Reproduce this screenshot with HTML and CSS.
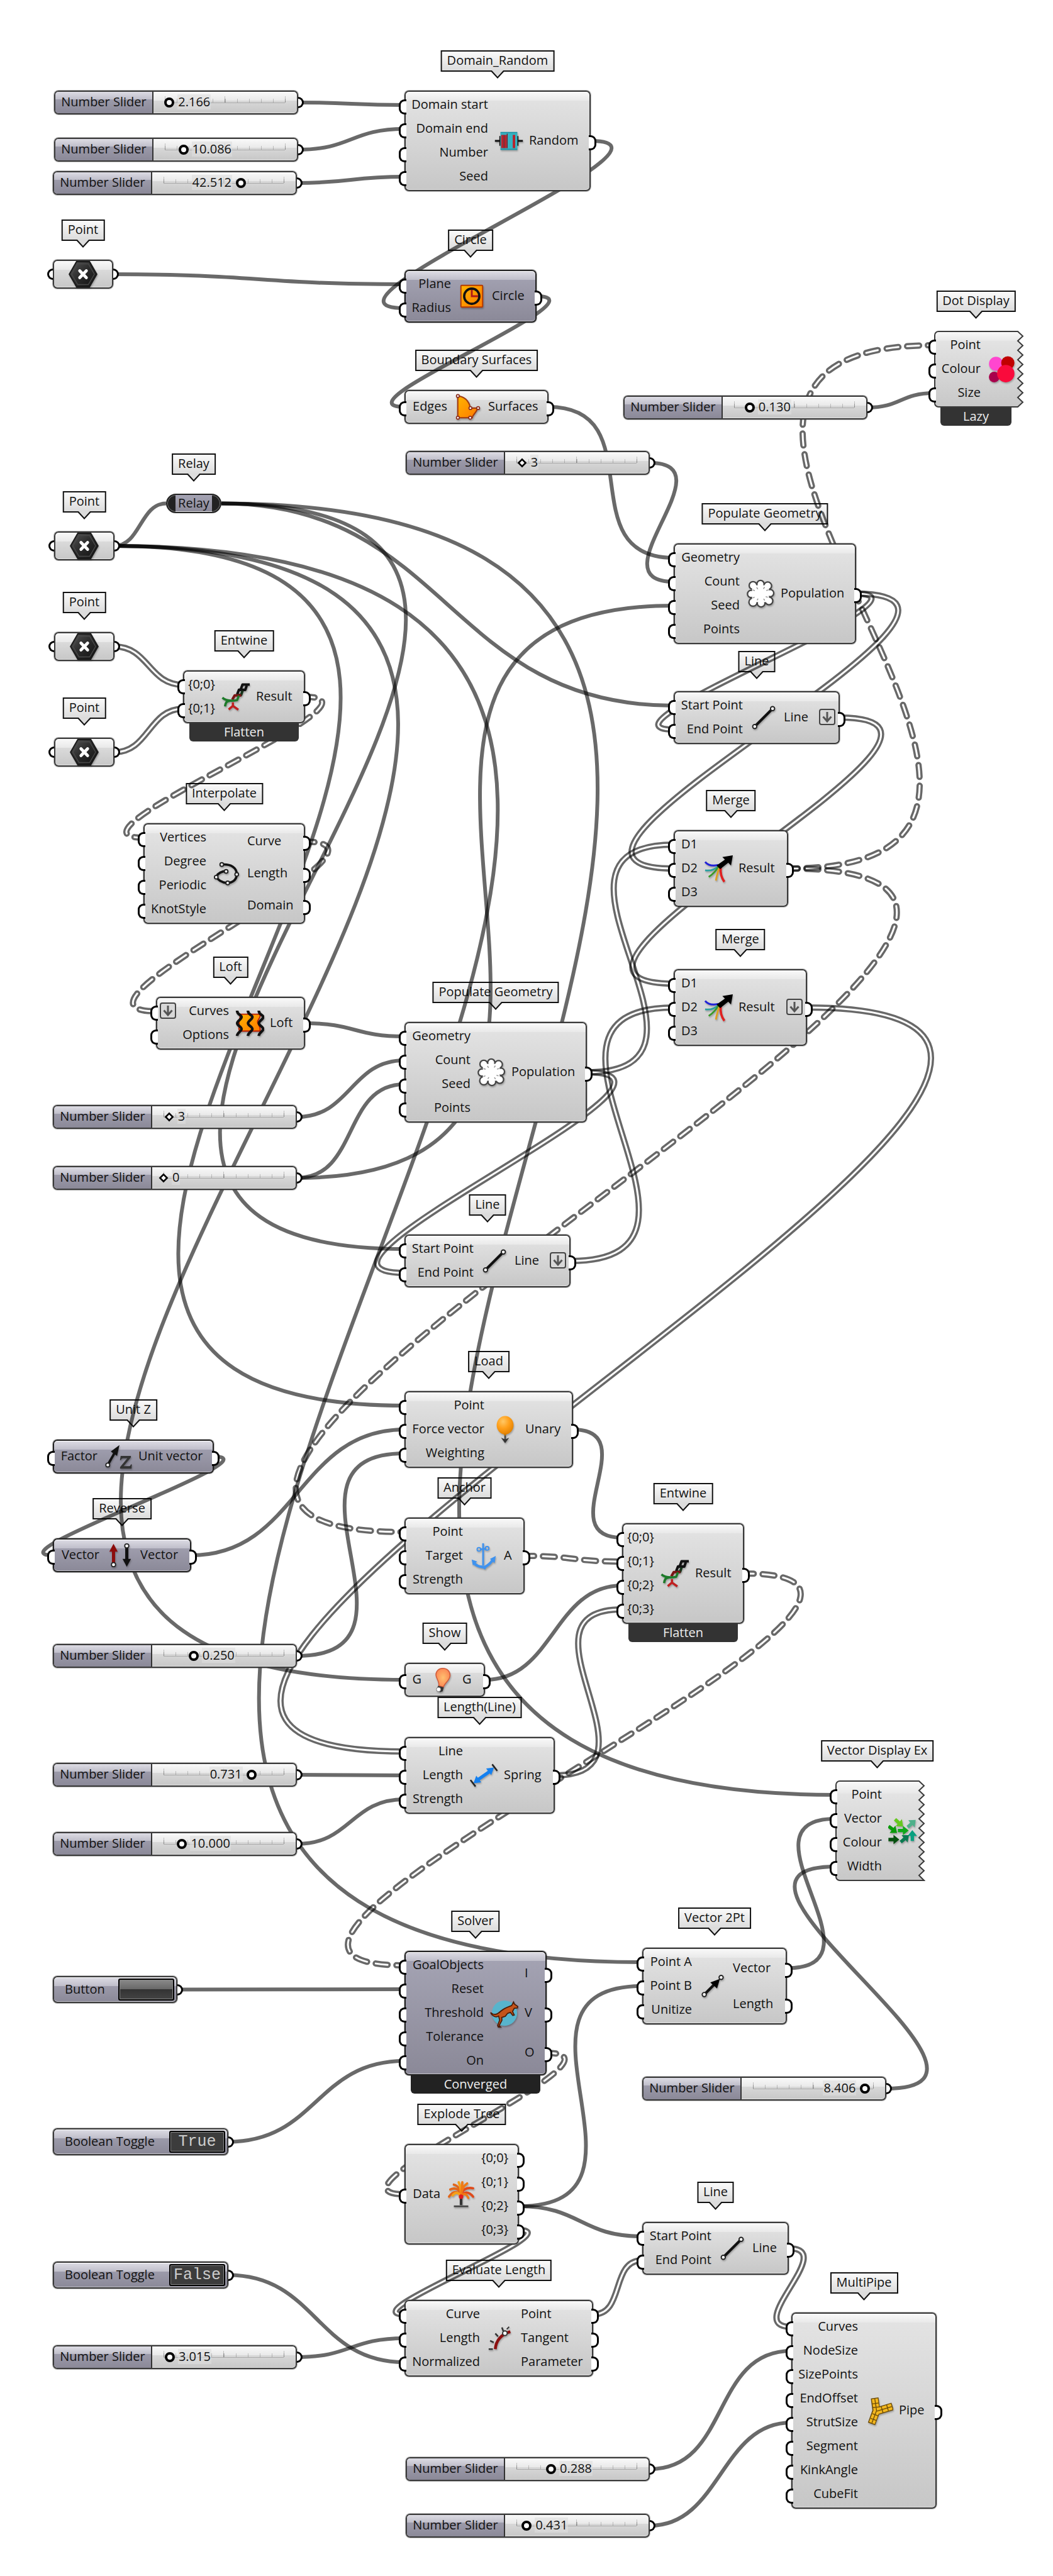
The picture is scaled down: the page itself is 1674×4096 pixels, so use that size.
FILE: index.html
```html
<!DOCTYPE html>
<html lang="en">
<head>
<meta charset="utf-8">
<title>Grasshopper definition</title>
<link rel="stylesheet" href="styles.css">
</head>
<body>
<svg class="defs" aria-hidden="true">
  <defs>
    <linearGradient id="metal" x1="0" y1="0" x2="0" y2="1">
      <stop offset="0" stop-color="#f9f9f9"/><stop offset=".12" stop-color="#e9e9e9"/>
      <stop offset=".13" stop-color="#e3e3e3"/><stop offset="1" stop-color="#c8c8c8"/>
    </linearGradient>
    <linearGradient id="fire" x1="0" y1="0" x2="1" y2="1">
      <stop offset="0" stop-color="#ffb400"/><stop offset="1" stop-color="#ff7a00"/>
    </linearGradient>
    <linearGradient id="coal" x1="0" y1="0" x2="1" y2="1">
      <stop offset="0" stop-color="#555"/><stop offset=".5" stop-color="#2a2a2a"/><stop offset="1" stop-color="#111"/>
    </linearGradient>
    <radialGradient id="balloon" cx=".38" cy=".3" r=".75">
      <stop offset="0" stop-color="#ffc866"/><stop offset=".5" stop-color="#ff9f1a"/><stop offset="1" stop-color="#e07f00"/>
    </radialGradient>
    <radialGradient id="bulb" cx=".5" cy=".5" r=".6">
      <stop offset="0" stop-color="#ffc070"/><stop offset="1" stop-color="#fb8050"/>
    </radialGradient>
    <symbol id="i-point" viewBox="0 0 24 24">
      <path d="M6.600 1.600h10.800L23.400 12l-6 10.400H6.600L.6 12z" fill="url(#coal)" stroke="#1a1a1a" stroke-width="1"/>
      <path d="M7.600 3.400h8.800L21.400 12l-5 8.600H7.600L2.600 12z" fill="none" stroke="#4a4a4a" stroke-width=".7"/>
      <path d="M9.300 9.200l5.400 5.600M14.700 9.200l-5.400 5.600" stroke="#fff" stroke-width="2.600" stroke-linecap="round"/>
    </symbol>
    <symbol id="i-random" viewBox="0 0 24 24">
      <path d="M.4 12H5M19 12h4.600" stroke="#111" stroke-width="1.500"/>
      <path d="M4.600 8v8M19.400 8v8" stroke="#111" stroke-width="1"/>
      <rect x="5" y="5" width="14" height="14" rx=".5" fill="#35b3c2"/>
      <path d="M5 5h14M5 19h14" stroke="#2193a4" stroke-width="1"/>
      <path d="M6.600 7v11M9.200 7v11M16.200 7v11" stroke="#b8232c" stroke-width="2"/>
      <path d="M7.900 7v11M10.600 6v12" stroke="#7c151d" stroke-width=".7"/>
    </symbol>
    <symbol id="i-circle" viewBox="0 0 24 24">
      <rect x="3" y="3" width="18" height="18" rx=".6" fill="url(#fire)" stroke="#b33a00" stroke-width="1"/>
      <path d="M12 5.500V12h6.500" stroke="#b01818" stroke-width="1.500" fill="none"/>
      <circle cx="12" cy="12" r="6.300" fill="none" stroke="#111" stroke-width="1.900"/>
    </symbol>
    <symbol id="i-boundary" viewBox="0 0 24 24">
      <path d="M3.500 3C10 3.500 13 8 14 13h6c-1 4-4 5-4.500 8h-12z" fill="url(#fire)" stroke="#a03a10" stroke-width="1.100"/>
      <g fill="#fff" stroke="#8c2f20" stroke-width=".9"><circle cx="3.600" cy="3" r="1.200"/><circle cx="14" cy="13" r="1.200"/><circle cx="20.400" cy="13" r="1.200"/><circle cx="3.600" cy="21" r="1.200"/><circle cx="13.800" cy="21" r="1.200"/></g>
    </symbol>
    <symbol id="i-cloud" viewBox="0 0 24 24">
      <g fill="#fff" stroke="#444" stroke-width="2.200"><circle cx="5.800" cy="5.200" r="2.700"/><circle cx="12" cy="4" r="2.500"/><circle cx="18" cy="5.500" r="2.700"/><circle cx="20" cy="11.500" r="2.500"/><circle cx="19" cy="18" r="2.700"/><circle cx="12.500" cy="19.800" r="2.700"/><circle cx="5.800" cy="19" r="2.900"/><circle cx="4.200" cy="12.200" r="2.500"/></g>
      <g fill="#fff"><circle cx="5.800" cy="5.200" r="2.600"/><circle cx="12" cy="4" r="2.400"/><circle cx="18" cy="5.500" r="2.600"/><circle cx="20" cy="11.500" r="2.400"/><circle cx="19" cy="18" r="2.600"/><circle cx="12.500" cy="19.800" r="2.600"/><circle cx="5.800" cy="19" r="2.800"/><circle cx="4.200" cy="12.200" r="2.400"/><rect x="5" y="5" width="14" height="14"/></g>
      <g stroke="#999" stroke-width=".8"><path d="M8.800 6.800l1 1.500M15.400 6.500l-1 1.500M18.600 8.800l-1.800.6M18 15l-1.700-.6M15.500 17.600l-.9-1.400M9.200 17.400l.8-1.300M5.500 15.600l1.600-.7M5.600 8.900l1.700.6"/></g>
    </symbol>
    <symbol id="i-line" viewBox="0 0 24 24">
      <path d="M4.700 19.300L19.300 4.700" stroke="#111" stroke-width="2.200"/>
      <g fill="#fff" stroke="#222" stroke-width="1"><circle cx="4.600" cy="19.400" r="1.700"/><circle cx="19.400" cy="4.600" r="1.700"/></g>
    </symbol>
    <symbol id="i-entwine" viewBox="0 0 24 24">
      <g fill="none" stroke-width="2.100" stroke-linejoin="round">
        <path d="M23.500 1.800h-6l-1.500 4" stroke="#111"/>
        <path d="M21 2.500l-1.200 3.700h-5.300l-1.500 3.800" stroke="#111"/>
        <path d="M17.500 7l-1.200 3.500h-3" stroke="#16331a"/>
        <path d="M16.500 10.800H11l-2 3.500" stroke="#7a1414"/>
        <path d="M14.500 11l-1.500 3.700C9 15.500 4 15.500.8 12.700" stroke="#1d7a2a" stroke-width="1.900"/>
        <path d="M7 15.300c-3 .2-3.600 1.700-4 4.700" stroke="#1d7a2a" stroke-width="1.900"/>
        <path d="M9.500 16.500v3L6 22.500M9.500 19.500l4.500 3.200" stroke="#c02020" stroke-width="1.800"/>
      </g>
    </symbol>
    <symbol id="i-interp" viewBox="0 0 24 24">
      <path d="M8 4.500C15 4 20 7 20 12.500c0 5-4 7.500-8 7.300C8 19.500 4.500 17.500 3 14.500 5 11 8 10 11.500 10" fill="none" stroke="#111" stroke-width="1.900"/>
      <g fill="#fff" stroke="#222" stroke-width="1"><circle cx="7.600" cy="4.500" r="1.500"/><circle cx="20" cy="12.700" r="1.500"/><circle cx="12.500" cy="19.800" r="1.500"/><circle cx="3" cy="15" r="1.500"/><circle cx="11.200" cy="10.200" r="1.500"/></g>
    </symbol>
    <symbol id="i-loft" viewBox="0 0 24 24">
      <path d="M3.500 4.500h17c1 3-2 4-2 6.500s3 3.500 2 7.500h-17c-1.500-3 .5-4.500-.5-7.500 0-2.500 2-3 .5-6.500z" fill="url(#fire)" stroke="#b81c00" stroke-width="1"/>
      <g fill="none" stroke="#111" stroke-width="2.200"><path d="M1.500 1.500c0 3.500 4 3.500 3.700 5.500S1.600 10 1.600 12s3.800 3 3.600 5-3.500 2.500-3.700 5.500"/><path d="M10.500 1.500c0 3.500 4 3.500 3.700 5.500s-3.600 3-3.600 5 3.800 3 3.600 5-3.500 2.500-3.700 5.500"/><path d="M19.500 1.500c0 3.500 4 3.500 3.700 5.500s-3.600 3-3.600 5 3.800 3 3.600 5-3.500 2.500-3.700 5.500"/></g>
    </symbol>
    <symbol id="i-merge" viewBox="0 0 24 24">
      <g fill="none" stroke-width="1.500">
        <path d="M1 6.500c3 3.500 7 3.500 11 2.500" stroke="#2222d8"/>
        <path d="M1 13.500c4 .5 8-.5 11-3.500" stroke="#2aa0a0"/>
        <path d="M4 19c3-2 6-5 8-8.500" stroke="#3a9a2a"/>
        <path d="M10 22c.5-4 1.500-7 3-11" stroke="#e0a020"/>
        <path d="M17 23c-3-4-3.500-8-3-12" stroke="#e02020" stroke-width="1.900"/>
      </g>
      <path d="M10.500 9.500l7-5-2.200-2L24 1l-1.500 8.500-2.300-2.300-6.700 5.300z" fill="#000"/>
    </symbol>
    <symbol id="i-unitz" viewBox="0 0 24 24">
      <path d="M3.500 18.500L9.500 8" stroke="#111" stroke-width="2"/><path d="M13 2.500L5.800 7.800l5.200 3.700z" fill="#111"/>
      <circle cx="3.300" cy="19" r="1.600" fill="#fff" stroke="#222" stroke-width=".9"/>
      <path d="M14 11.500h8.500v1.200l-6 7.300h4.200c1 0 1.400-.5 1.800-1.500h.8l-.3 3.500h-9.500v-1.200l6-7.400h-3.300c-1.200 0-1.600.5-2 1.600h-.8z" fill="#333"/>
    </symbol>
    <symbol id="i-reverse" viewBox="0 0 24 24">
      <path d="M6.500 19V8" stroke="#8c0c0c" stroke-width="2.600"/><path d="M6.500 2.500L3 9h7z" fill="#8c0c0c"/>
      <path d="M17.500 5v11" stroke="#111" stroke-width="2.600"/><path d="M17.500 21.500L14 15h7z" fill="#111"/>
      <g fill="#fff" stroke="#222" stroke-width=".9"><circle cx="6.500" cy="19.800" r="1.700"/><circle cx="17.500" cy="4.200" r="1.700"/></g>
    </symbol>
    <symbol id="i-load" viewBox="0 0 24 24">
      <path d="M12 15v7" stroke="#444" stroke-width="1.300"/><path d="M8.600 18.800L12 23.400l3.400-4.600-3.400 1.400z" fill="#333"/>
      <ellipse cx="12" cy="8.400" rx="7" ry="7.600" fill="url(#balloon)"/><path d="M10.600 15.500h2.800l-1.400 1.800z" fill="#d07a00"/>
    </symbol>
    <symbol id="i-anchor" viewBox="0 0 24 24">
      <g fill="none" stroke="#3f92ee" stroke-width="1.500"><path d="M11.500 1.500V20"/><circle cx="8" cy="6.500" r="1.500" stroke-width="1"/><circle cx="14.800" cy="5.700" r="1.500" stroke-width="1"/><path d="M9 6.600l5-.6"/><path d="M3.500 17.500c3 3.500 6 3.500 9 4 3-1.500 5.500-3.500 7.500-7" stroke-width="2.200"/></g>
      <path d="M2 15l4.500 1.500L3 20zM22 12l-1 6-3.800-3.500zM9.500 20l3.500 3.500 2-3z" fill="#3f92ee"/>
    </symbol>
    <symbol id="i-show" viewBox="0 0 24 24">
      <path d="M12.500 2.500c4 0 6 2.800 6 5.800 0 4-4.500 6.200-5.500 9.700l-3.800-1C9.800 13 6.800 11 6.800 7.800c0-3 2.200-5.300 5.700-5.300z" fill="url(#bulb)" stroke="#d05a3a" stroke-width=".8"/>
      <path d="M8.500 17l4.800 1.200-.9 3.300-2.200.8-2.900-1.500z" fill="#333"/><circle cx="9" cy="20" r="1.800" fill="#fff" stroke="#777" stroke-width=".5"/>
    </symbol>
    <symbol id="i-spring" viewBox="0 0 24 24">
      <path d="M6.500 16L18 8" stroke="#1480f0" stroke-width="2.600"/><path d="M3.500 18.500l2.300-6.300 4.200 5.600zM20.500 5.500l-2.300 6.300-4.200-5.600z" fill="#1480f0"/>
      <path d="M1 15.800l4.200 5.400M19 2.800l4.200 5.400" stroke="#222" stroke-width="1.300"/>
    </symbol>
    <symbol id="i-dots" viewBox="0 0 24 24">
      <circle cx="7.500" cy="7.500" r="5.800" fill="#ff46cf"/><circle cx="17.300" cy="6.800" r="5.500" fill="#c00000"/><circle cx="6" cy="18.500" r="4.400" fill="#a8004c"/><circle cx="15.600" cy="15.700" r="7.200" fill="#fa0a3c"/>
    </symbol>
    <symbol id="i-arrows" viewBox="0 0 24 24">
      <defs><path id="arr" d="M-4.500-1.400H-.3V-3.900L4.500 0-.3 3.900V1.400h-4.200z"/></defs>
      <use href="#arr" transform="translate(9 5.500) rotate(42)" fill="#66c81e"/>
      <use href="#arr" transform="translate(19.500 6) rotate(-42)" fill="#4fb08a"/>
      <use href="#arr" transform="translate(3.800 11) rotate(38)" fill="#0a9a0a"/>
      <use href="#arr" transform="translate(12.500 11.800)" fill="#10a81a"/>
      <use href="#arr" transform="translate(20 16) rotate(-90)" fill="#0aa080"/>
      <use href="#arr" transform="translate(4.700 19.300)" fill="#06500e"/>
      <use href="#arr" transform="translate(13.800 18.500) rotate(-40)" fill="#0a7a50"/>
    </symbol>
    <symbol id="i-vector" viewBox="0 0 24 24">
      <path d="M5 19l8-8" stroke="#111" stroke-width="2.200"/><path d="M18 6l-2.400 8-5.600-5z" fill="#000"/>
      <g fill="#fff" stroke="#222" stroke-width="1"><circle cx="5" cy="19" r="1.700"/><circle cx="19" cy="4.800" r="1.700"/></g>
    </symbol>
    <symbol id="i-kangaroo" viewBox="0 0 24 24">
      <circle cx="12" cy="12" r="10.500" fill="#58b4cc"/>
      <path d="M.5 11.500c3.500 3 6 1 8.500-1.200 3-2.600 6-3.500 9-4.600l1.500-3 .8 1.800 2.700 1.900-.3 1.300-2.600.3-1.400 2.600 1.400 3-1.200.4-2-2.600-2.400.8-1.800 2.400-3 1 .2 2.300-2.400 4.600 1.200 1-1.800.1-.6-1.300 1.700-4.600-.9-3.300C5.200 15.800 1.800 14.800.5 11.500z" fill="#c4541a" stroke="#4a1c08" stroke-width=".9"/>
    </symbol>
    <symbol id="i-tree" viewBox="0 0 24 24">
      <path d="M12 13v8" stroke="#333" stroke-width="2.200"/><path d="M6 22h12" stroke="#444" stroke-width="1.400"/>
      <g fill="none" stroke-width="1.900" stroke-linecap="round">
        <path d="M12 14C10 10 6 8 2 14M12 14c0-6-5-8-9-6M12 14c0-5-2-9-6-10" stroke="#e2661a"/>
        <path d="M12 14c2-4 6-5 10 0M12 14c0-6 5-8 10-7" stroke="#e04a1a"/>
        <path d="M12 14c-2-4-5-4-7-1M12 14c0-6-.5-9-2-12" stroke="#f5a11a"/>
        <path d="M12 14c0-5 2-9 5-11M12 14c2-3 4-3 6 1M12 14c0-5 1-7 1-12" stroke="#f07a14"/>
      </g>
      <circle cx="12" cy="14" r="1.900" fill="#e01c1c"/>
    </symbol>
    <symbol id="i-eval" viewBox="0 0 24 24">
      <path d="M7.500 21c.5-7 5-12.500 12.500-14.500" fill="none" stroke="#8c1010" stroke-width="2.400"/>
      <path d="M2 21h3.500M3.200 14l3 1.500M7.500 8l2.300 2.500M13 3l1.200 3.200" stroke="#333" stroke-width="1.300"/>
      <circle cx="15.500" cy="7.800" r="1.900" fill="#fff" stroke="#333" stroke-width="1"/><path d="M17 4.500l2-2" stroke="#333" stroke-width="1"/>
    </symbol>
    <symbol id="i-pipe" viewBox="0 0 24 24">
      <g stroke="#6a4a08" stroke-width="6.400"><path d="M8.600 1.500L10 12 6 23"/><path d="M10.500 12.500L23.500 8.500"/></g>
      <g fill="none" stroke="#f3b71e" stroke-width="5"><path d="M8.700 2.200L10.200 12 6.300 22.300"/><path d="M10.500 12.500L22.800 8.700"/></g>
      <path d="M6.500 6.500l5.500-.8M7 9.500l5.500-.6M6.800 14.500l5 2M5.300 18.500l5 1.800M14 8.500l1.500 5.200M18.500 7.200l1.500 5M8.700 2.200L10.200 12 6.300 22.300M10.500 12.500l12.300-3.800" fill="none" stroke="#6a4a08" stroke-width=".7"/>
    </symbol>
    <symbol id="i-down" viewBox="0 0 26 26">
      <rect x="1" y="1" width="24" height="24" rx="3" fill="#d8d8d8" stroke="#444" stroke-width="2"/>
      <path d="M13 5v14M6.500 12.500L13 20l6.500-7.500" fill="none" stroke="#555" stroke-width="3"/>
    </symbol>
  </defs>
</svg>

<main class="canvas">
  <svg class="wires" aria-hidden="true"></svg>

  <div class="node slider n-start"><div class="body"><label for="start">Number Slider</label><input type="range" id="start" min="0" max="57" step="0.001" value="2.166"><output for="start" style="--p:.038">2.166</output><i class="grip right"></i></div></div>
  <div class="node slider n-end"><div class="body"><label for="end">Number Slider</label><input type="range" id="end" min="0" max="65" step="0.001" value="10.086"><output for="end" style="--p:.155">10.086</output><i class="grip right"></i></div></div>
  <div class="node slider flip n-seed"><div class="body"><label for="seed">Number Slider</label><input type="range" id="seed" min="0" max="66" step="0.001" value="42.512"><output for="seed" style="--p:.644">42.512</output><i class="grip right"></i></div></div>

  <section class="node n-domain"><h2 class="tag">Domain_Random</h2><div class="body">
    <ul class="in"><li>Domain start</li><li>Domain end</li><li>Number</li><li>Seed</li></ul>
    <svg class="icon"><use href="#i-random"/></svg>
    <ul class="out"><li>Random</li></ul></div></section>

  <section class="node param n-pt0"><h2 class="tag">Point</h2><div class="body"><i class="grip left"></i><svg class="icon"><use href="#i-point"/></svg><i class="grip right"></i></div></section>

  <section class="node hidden n-circle"><h2 class="tag">Circle</h2><div class="body">
    <ul class="in"><li>Plane</li><li>Radius</li></ul>
    <svg class="icon"><use href="#i-circle"/></svg>
    <ul class="out"><li>Circle</li></ul></div></section>

  <section class="node n-boundary"><h2 class="tag">Boundary Surfaces</h2><div class="body">
    <ul class="in"><li>Edges</li></ul>
    <svg class="icon"><use href="#i-boundary"/></svg>
    <ul class="out"><li>Surfaces</li></ul></div></section>

  <section class="node jagged n-dots"><h2 class="tag">Dot Display</h2><div class="body">
    <svg class="torn" viewBox="0 0 143 122"><path d="M7 1H133l8 7.500-8 7.500 8 7.500-8 7.500 8 7.500-8 7.500 8 7.500-8 7.500 8 7.500-8 7.500 8 7.500-8 7.500 8 7.500-8 7.500 8 7.500-8 7.500H7a6 6 0 0 1-6-6V7a6 6 0 0 1 6-6z"/></svg>
    <ul class="in"><li>Point</li><li>Colour</li><li>Size</li></ul>
    <svg class="icon"><use href="#i-dots"/></svg></div><p class="bar">Lazy</p></section>

  <div class="node slider n-dotsize"><div class="body"><label for="dotsize">Number Slider</label><input type="range" id="dotsize" min="0" max="1" step="0.001" value="0.130"><output for="dotsize" style="--p:.13">0.130</output><i class="grip right"></i></div></div>
  <div class="node slider whole n-count1"><div class="body"><label for="count1">Number Slider</label><input type="range" id="count1" min="0" max="65" value="3"><output for="count1" style="--p:.046">3</output><i class="grip right"></i></div></div>

  <section class="node n-pop1"><h2 class="tag">Populate Geometry</h2><div class="body">
    <ul class="in"><li>Geometry</li><li>Count</li><li>Seed</li><li>Points</li></ul>
    <svg class="icon"><use href="#i-cloud"/></svg>
    <ul class="out"><li>Population</li></ul></div></section>

  <section class="node n-line1"><h2 class="tag">Line</h2><div class="body">
    <ul class="in"><li>Start Point</li><li>End Point</li></ul>
    <svg class="icon"><use href="#i-line"/></svg>
    <ul class="out"><li>Line<svg class="mod"><use href="#i-down"/></svg></li></ul></div></section>

  <section class="node relay n-relay"><h2 class="tag">Relay</h2><div class="body"><span>Relay</span></div></section>
  <section class="node param n-pt1"><h2 class="tag">Point</h2><div class="body"><i class="grip left"></i><svg class="icon"><use href="#i-point"/></svg><i class="grip right"></i></div></section>
  <section class="node param n-pt2"><h2 class="tag">Point</h2><div class="body"><i class="grip left"></i><svg class="icon"><use href="#i-point"/></svg><i class="grip right"></i></div></section>
  <section class="node param n-pt3"><h2 class="tag">Point</h2><div class="body"><i class="grip left"></i><svg class="icon"><use href="#i-point"/></svg><i class="grip right"></i></div></section>

  <section class="node n-ent1"><h2 class="tag">Entwine</h2><div class="body">
    <ul class="in"><li>{0;0}</li><li>{0;1}</li></ul>
    <svg class="icon"><use href="#i-entwine"/></svg>
    <ul class="out"><li>Result</li></ul></div><p class="bar">Flatten</p></section>

  <section class="node n-interp"><h2 class="tag">Interpolate</h2><div class="body">
    <ul class="in"><li>Vertices</li><li>Degree</li><li>Periodic</li><li>KnotStyle</li></ul>
    <svg class="icon"><use href="#i-interp"/></svg>
    <ul class="out"><li>Curve</li><li>Length</li><li>Domain</li></ul></div></section>

  <section class="node n-loft"><h2 class="tag">Loft</h2><div class="body">
    <ul class="in"><li><svg class="mod"><use href="#i-down"/></svg>Curves</li><li>Options</li></ul>
    <svg class="icon"><use href="#i-loft"/></svg>
    <ul class="out"><li>Loft</li></ul></div></section>

  <div class="node slider whole n-count2"><div class="body"><label for="count2">Number Slider</label><input type="range" id="count2" min="0" max="65" value="3"><output for="count2" style="--p:.046">3</output><i class="grip right"></i></div></div>
  <div class="node slider whole n-seed2"><div class="body"><label for="seed2">Number Slider</label><input type="range" id="seed2" min="0" max="65" value="0"><output for="seed2" style="--p:0">0</output><i class="grip right"></i></div></div>

  <section class="node n-merge1"><h2 class="tag">Merge</h2><div class="body">
    <ul class="in"><li>D1</li><li>D2</li><li>D3</li></ul>
    <svg class="icon"><use href="#i-merge"/></svg>
    <ul class="out"><li>Result</li></ul></div></section>

  <section class="node n-merge2"><h2 class="tag">Merge</h2><div class="body">
    <ul class="in"><li>D1</li><li>D2</li><li>D3</li></ul>
    <svg class="icon"><use href="#i-merge"/></svg>
    <ul class="out"><li>Result<svg class="mod"><use href="#i-down"/></svg></li></ul></div></section>

  <section class="node n-pop2"><h2 class="tag">Populate Geometry</h2><div class="body">
    <ul class="in"><li>Geometry</li><li>Count</li><li>Seed</li><li>Points</li></ul>
    <svg class="icon"><use href="#i-cloud"/></svg>
    <ul class="out"><li>Population</li></ul></div></section>

  <section class="node n-line2"><h2 class="tag">Line</h2><div class="body">
    <ul class="in"><li>Start Point</li><li>End Point</li></ul>
    <svg class="icon"><use href="#i-line"/></svg>
    <ul class="out"><li>Line<svg class="mod"><use href="#i-down"/></svg></li></ul></div></section>

  <section class="node hidden n-unitz"><h2 class="tag">Unit Z</h2><div class="body">
    <ul class="in"><li>Factor</li></ul>
    <svg class="icon"><use href="#i-unitz"/></svg>
    <ul class="out"><li>Unit vector</li></ul></div></section>

  <section class="node hidden n-reverse"><h2 class="tag">Reverse</h2><div class="body">
    <ul class="in"><li>Vector</li></ul>
    <svg class="icon"><use href="#i-reverse"/></svg>
    <ul class="out"><li>Vector</li></ul></div></section>

  <section class="node n-load"><h2 class="tag">Load</h2><div class="body">
    <ul class="in"><li>Point</li><li>Force vector</li><li>Weighting</li></ul>
    <svg class="icon"><use href="#i-load"/></svg>
    <ul class="out"><li>Unary</li></ul></div></section>

  <section class="node n-anchor"><h2 class="tag">Anchor</h2><div class="body">
    <ul class="in"><li>Point</li><li>Target</li><li>Strength</li></ul>
    <svg class="icon"><use href="#i-anchor"/></svg>
    <ul class="out"><li>A</li></ul></div></section>

  <section class="node n-ent2"><h2 class="tag">Entwine</h2><div class="body">
    <ul class="in"><li>{0;0}</li><li>{0;1}</li><li>{0;2}</li><li>{0;3}</li></ul>
    <svg class="icon"><use href="#i-entwine"/></svg>
    <ul class="out"><li>Result</li></ul></div><p class="bar">Flatten</p></section>

  <div class="node slider n-weight"><div class="body"><label for="weight">Number Slider</label><input type="range" id="weight" min="0" max="1" step="0.001" value="0.250"><output for="weight" style="--p:.25">0.250</output><i class="grip right"></i></div></div>

  <section class="node n-show"><h2 class="tag">Show</h2><div class="body">
    <ul class="in"><li>G</li></ul>
    <svg class="icon"><use href="#i-show"/></svg>
    <ul class="out"><li>G</li></ul></div></section>

  <section class="node n-length"><h2 class="tag">Length(Line)</h2><div class="body">
    <ul class="in"><li>Line</li><li>Length</li><li>Strength</li></ul>
    <svg class="icon"><use href="#i-spring"/></svg>
    <ul class="out"><li>Spring</li></ul></div></section>

  <div class="node slider flip n-len"><div class="body"><label for="len">Number Slider</label><input type="range" id="len" min="0" max="1" step="0.001" value="0.731"><output for="len" style="--p:.731">0.731</output><i class="grip right"></i></div></div>
  <div class="node slider n-strength"><div class="body"><label for="strength">Number Slider</label><input type="range" id="strength" min="0" max="65" step="0.001" value="10"><output for="strength" style="--p:.154">10.000</output><i class="grip right"></i></div></div>

  <section class="node jagged n-vdisp"><h2 class="tag">Vector Display Ex</h2><div class="body">
    <svg class="torn" viewBox="0 0 143 160"><path d="M7 1H133l8 7.500-8 7.500 8 7.500-8 7.500 8 7.500-8 7.500 8 7.500-8 7.500 8 7.500-8 7.500 8 7.500-8 7.500 8 7.500-8 7.500 8 7.500-8 7.500 8 7.500-8 7.500 8 7.500-8 7.500 8 8H7a6 6 0 0 1-6-6V7a6 6 0 0 1 6-6z"/></svg>
    <ul class="in"><li>Point</li><li>Vector</li><li>Colour</li><li>Width</li></ul>
    <svg class="icon"><use href="#i-arrows"/></svg></div></section>

  <section class="node n-vec2"><h2 class="tag">Vector 2Pt</h2><div class="body">
    <ul class="in"><li>Point A</li><li>Point B</li><li>Unitize</li></ul>
    <svg class="icon"><use href="#i-vector"/></svg>
    <ul class="out"><li>Vector</li><li>Length</li></ul></div></section>

  <div class="node slider flip n-width"><div class="body"><label for="width">Number Slider</label><input type="range" id="width" min="0" max="9" step="0.001" value="8.406"><output for="width" style="--p:.934">8.406</output><i class="grip right"></i></div></div>

  <section class="node hidden solver n-solver"><h2 class="tag">Solver</h2><div class="body">
    <ul class="in"><li>GoalObjects</li><li>Reset</li><li>Threshold</li><li>Tolerance</li><li>On</li></ul>
    <svg class="icon"><use href="#i-kangaroo"/></svg>
    <ul class="out"><li>I</li><li>V</li><li>O</li></ul></div><p class="bar">Converged</p></section>

  <div class="node switch n-button"><div class="body"><label for="reset">Button</label><button type="button" id="reset" class="press"></button><i class="grip right"></i></div></div>
  <div class="node switch n-true"><div class="body"><label for="on">Boolean Toggle</label><button type="button" id="on">True</button><i class="grip right"></i></div></div>
  <div class="node switch n-false"><div class="body"><label for="norm">Boolean Toggle</label><button type="button" id="norm">False</button><i class="grip right"></i></div></div>

  <section class="node n-explode"><h2 class="tag">Explode Tree</h2><div class="body">
    <ul class="in"><li>Data</li></ul>
    <svg class="icon"><use href="#i-tree"/></svg>
    <ul class="out"><li>{0;0}</li><li>{0;1}</li><li>{0;2}</li><li>{0;3}</li></ul></div></section>

  <section class="node n-eval"><h2 class="tag">Evaluate Length</h2><div class="body">
    <ul class="in"><li>Curve</li><li>Length</li><li>Normalized</li></ul>
    <svg class="icon"><use href="#i-eval"/></svg>
    <ul class="out"><li>Point</li><li>Tangent</li><li>Parameter</li></ul></div></section>

  <div class="node slider n-evlen"><div class="body"><label for="evlen">Number Slider</label><input type="range" id="evlen" min="0" max="58" step="0.001" value="3.015"><output for="evlen" style="--p:.052">3.015</output><i class="grip right"></i></div></div>

  <section class="node n-line3"><h2 class="tag">Line</h2><div class="body">
    <ul class="in"><li>Start Point</li><li>End Point</li></ul>
    <svg class="icon"><use href="#i-line"/></svg>
    <ul class="out"><li>Line</li></ul></div></section>

  <section class="node n-pipe"><h2 class="tag">MultiPipe</h2><div class="body">
    <ul class="in"><li>Curves</li><li>NodeSize</li><li>SizePoints</li><li>EndOffset</li><li>StrutSize</li><li>Segment</li><li>KinkAngle</li><li>CubeFit</li></ul>
    <svg class="icon"><use href="#i-pipe"/></svg>
    <ul class="out"><li>Pipe</li></ul></div></section>

  <div class="node slider n-nodesize"><div class="body"><label for="nodesize">Number Slider</label><input type="range" id="nodesize" min="0" max="1" step="0.001" value="0.288"><output for="nodesize" style="--p:.288">0.288</output><i class="grip right"></i></div></div>
  <div class="node slider n-strut"><div class="body"><label for="strut">Number Slider</label><input type="range" id="strut" min="0" max="5" step="0.001" value="0.431"><output for="strut" style="--p:.086">0.431</output><i class="grip right"></i></div></div>
</main>
<script src="wires.js"></script>
</body>
</html>
```
FILE: styles.css
```css
* { box-sizing: border-box; }

body {
  margin: 0;
  background: #fff;
  color: #111;
  font: 20px/24px "Open Sans", "Noto Sans", sans-serif;
}

.defs { position: absolute; width: 0; height: 0; }

.canvas {
  position: relative;
  width: 100%;
  aspect-ratio: 1674 / 4096;
  overflow: hidden;
}

/* Stacking: name tags, then wires, then component bodies. */
.wires {
  position: absolute;
  inset: 0;
  width: 100%;
  height: 100%;
  z-index: 2;
  pointer-events: none;
}
.wires path { fill: none; }
.wires .wire { stroke: #000; opacity: .59; }

.node { position: absolute; }
.node .body { position: relative; z-index: 3; }

.tag {
  position: absolute;
  z-index: 1;
  left: 50%;
  bottom: calc(100% + 30px);
  transform: translateX(-50%);
  margin: 0;
  height: 34px;
  padding: 0 8px;
  border: 2px solid #111;
  background: linear-gradient(#fafafa, #dcdcdc);
  font-size: 20px;
  font-weight: 400;
  line-height: 28px;
  white-space: nowrap;
}
.tag::before, .tag::after {
  content: "";
  position: absolute;
  left: 50%;
  transform: translateX(-50%);
  clip-path: polygon(0 0, 100% 0, 50% 100%);
}
.tag::before { top: 100%; width: 24px; height: 13px; background: #111; }
.tag::after { top: calc(100% - 1px); width: 20px; height: 11px; background: #dcdcdc; }

.body {
  --lit: #f9f9f9;
  --gloss: #e9e9e9;
  --top: #e4e4e4;
  --low: #c7c7c7;
  display: grid;
  grid-template-columns: calc(var(--in) - 2px) 65px 1fr;
  align-items: stretch;
  min-height: 54px;
  padding: 2px 0;
  border: 2px solid #3a3a3a;
  border-radius: 7px;
  background:
    linear-gradient(var(--lit), var(--gloss)) top / 100% 14px no-repeat,
    linear-gradient(var(--top), var(--low));
  box-shadow: 0 0 0 1px rgba(40, 40, 40, .35), inset 0 1px 0 #fff, inset 0 -1px 0 rgba(255, 255, 255, .5);
}
.hidden .body, .switch .body, .slider label {
  --lit: #dddce4;
  --gloss: #bfbeca;
  --top: #a5a4b4;
  --low: #8b8998;
}
.hidden .body { border-color: #222; }

.in, .out {
  display: flex;
  flex-direction: column;
  margin: 0;
  padding: 0;
  list-style: none;
  white-space: nowrap;
}
.in li, .out li {
  position: relative;
  display: flex;
  flex: 1;
  align-items: center;
  min-height: 38px;
  padding-bottom: 2px;
}
.in li { justify-content: flex-end; }

.in li::before, .out li::before, .grip {
  content: "";
  position: absolute;
  top: calc(50% - 9px);
  width: 9px;
  height: 18px;
  border: 3px solid #000;
  background: #fff;
}
.in li::before, .grip.left { left: -11px; border-right: 0; border-radius: 9px 0 0 9px; }
.out li::before, .grip.right { right: -11px; border-left: 0; border-radius: 0 9px 9px 0; }

.icon { place-self: center; width: 46px; height: 46px; filter: drop-shadow(1px 2px 1px rgba(0, 0, 0, .25)); }
.mod { flex: none; width: 26px; height: 26px; }
.out .mod { margin: 0 5px 0 auto; }
.in .mod { margin: 0 auto 0 4px; }

.bar {
  position: absolute;
  z-index: 3;
  top: 100%;
  left: 10px;
  right: 10px;
  height: 29px;
  margin: 0;
  border-radius: 0 0 6px 6px;
  background: #333;
  color: #eee;
  line-height: 27px;
  text-align: center;
}
.solver .bar { background: #222; }

/* Single parameter */
.param { width: 96px; }
.param .body { display: flex; justify-content: center; align-items: center; min-height: 46px; height: 46px; padding: 0; }

/* Torn right edge */
.jagged { width: 133px; }
.jagged .body { border-color: transparent; background: none; box-shadow: none; }
.torn { position: absolute; top: -2px; left: -2px; width: 143px; }
.torn path { fill: url(#metal); stroke: #3a3a3a; stroke-width: 2; }

/* Number slider */
.slider { width: 388px; }
.slider .body { display: flex; align-items: stretch; min-height: 0; height: 38px; padding: 0; }
.slider label {
  flex: none;
  width: 156px;
  border-right: 2px solid #333;
  border-radius: 5px 0 0 5px;
  background:
    linear-gradient(var(--lit), var(--gloss)) top / 100% 12px no-repeat,
    linear-gradient(var(--top), var(--low));
  line-height: 32px;
  text-align: center;
}
.slider input {
  appearance: none;
  flex: none;
  width: 207px;
  height: 34px;
  margin: 0 0 0 10px;
  --tick: rgba(0, 0, 0, .2);
  background:
    linear-gradient(var(--tick), var(--tick)) 8px 17px / 191px 1px no-repeat,
    repeating-linear-gradient(90deg, var(--tick) 0 1px, transparent 1px calc(191px / 10)) 8px 11px / 192px 6px no-repeat,
    repeating-linear-gradient(90deg, var(--tick) 0 1px, transparent 1px calc(191px / 2)) 8px 7px / 192px 10px no-repeat;
}
.slider input::-webkit-slider-thumb {
  appearance: none;
  width: 16px;
  height: 16px;
  border: 4px solid #000;
  border-radius: 50%;
  background: #fff;
}
.whole input::-webkit-slider-thumb { border-radius: 0; transform: rotate(45deg) scale(.66); }
.slider output {
  position: absolute;
  left: calc(187px + 191px * var(--p));
  padding: 0 1px;
  background: rgba(221, 221, 221, .6);
  line-height: 24px;
  top: 4px;
}
.flip output { left: auto; right: calc(224px - 191px * var(--p)); }

/* Relay */
.relay .body {
  display: flex;
  min-height: 0;
  height: 31px;
  padding: 0 13px;
  border-color: #222;
  border-radius: 16px;
  background: #222;
  box-shadow: inset 0 0 0 1px #777;
}
.relay span {
  flex: 1;
  background: linear-gradient(#a5a4b4, #8b8998);
  box-shadow: inset 0 -1px 0 #ddd;
  line-height: 25px;
  text-align: center;
}

/* Button and toggles */
.switch .body { display: flex; align-items: center; justify-content: space-between; min-height: 0; height: 43px; padding: 0 3px 0 17px; }
.switch label { padding-bottom: 2px; }
.switch button {
  flex: none;
  width: 89px;
  height: 35px;
  padding: 0;
  border: 2px solid #000;
  border-radius: 3px;
  background: #3c3c3c;
  box-shadow: inset 0 0 0 1px #888;
  color: #ccc;
  font: 25px/29px "Liberation Mono", monospace;
}
.switch .press { background: linear-gradient(#8a8a8a, #686868 48%, #333 50%, #444); }

/* Places on the canvas */
.n-start { left: 86px; top: 144px; }
.n-end { left: 86px; top: 219px; }
.n-seed { left: 84px; top: 272px; }
.n-domain { left: 643px; top: 144px; width: 296px; --in: 133px; }
.n-pt0 { left: 84px; top: 413px; }
.n-circle { left: 643px; top: 429px; width: 210px; --in: 74px; }
.n-boundary { left: 643px; top: 620px; width: 229px; --in: 68px; }
.n-dots { left: 1485px; top: 526px; --in: 74px; }
.n-dotsize { left: 991px; top: 629px; }
.n-count1 { left: 645px; top: 717px; }
.n-pop1 { left: 1071px; top: 864px; width: 290px; --in: 105px; }
.n-line1 { left: 1071px; top: 1099px; width: 264px; --in: 110px; }
.n-relay { left: 264px; top: 785px; width: 88px; }
.n-pt1 { left: 86px; top: 845px; }
.n-pt2 { left: 86px; top: 1005px; }
.n-pt3 { left: 86px; top: 1173px; }
.n-ent1 { left: 291px; top: 1066px; width: 194px; --in: 51px; }
.n-interp { left: 228px; top: 1309px; width: 257px; --in: 100px; }
.n-loft { left: 248px; top: 1585px; width: 237px; --in: 116px; }
.n-count2 { left: 84px; top: 1757px; }
.n-seed2 { left: 84px; top: 1854px; }
.n-merge1 { left: 1071px; top: 1320px; width: 182px; --in: 38px; }
.n-merge2 { left: 1071px; top: 1541px; width: 212px; --in: 38px; }
.n-pop2 { left: 643px; top: 1625px; width: 290px; --in: 105px; }
.n-line2 { left: 643px; top: 1963px; width: 264px; --in: 110px; }
.n-unitz { left: 84px; top: 2289px; width: 256px; --in: 71px; }
.n-reverse { left: 84px; top: 2446px; width: 220px; --in: 74px; }
.n-load { left: 643px; top: 2212px; width: 268px; --in: 127px; }
.n-anchor { left: 643px; top: 2413px; width: 191px; --in: 93px; }
.n-ent2 { left: 989px; top: 2422px; width: 194px; --in: 51px; }
.n-weight { left: 84px; top: 2614px; }
.n-show { left: 643px; top: 2644px; width: 128px; --in: 27px; }
.n-length { left: 643px; top: 2762px; width: 239px; --in: 93px; }
.n-len { left: 84px; top: 2803px; }
.n-strength { left: 84px; top: 2913px; }
.n-vdisp { left: 1328px; top: 2831px; --in: 74px; }
.n-vec2 { left: 1021px; top: 3097px; width: 230px; --in: 79px; }
.n-width { left: 1021px; top: 3302px; }
.n-solver { left: 643px; top: 3102px; width: 226px; --in: 126px; }
.n-button { left: 84px; top: 3142px; width: 198px; }
.n-true { left: 84px; top: 3384px; width: 279px; }
.n-false { left: 84px; top: 3596px; width: 279px; }
.n-explode { left: 643px; top: 3409px; width: 182px; --in: 57px; }
.n-eval { left: 643px; top: 3657px; width: 300px; --in: 120px; }
.n-evlen { left: 84px; top: 3729px; }
.n-line3 { left: 1021px; top: 3533px; width: 233px; --in: 110px; }
.n-pipe { left: 1258px; top: 3677px; width: 231px; --in: 106px; }
.n-nodesize { left: 645px; top: 3907px; }
.n-strut { left: 645px; top: 3997px; }
```
FILE: wires.js
```js
// Each wire: kind, source node, output index, target node, input index.
// item = one value, list = double line, tree = dashed double line.
const WIRES = [
  ["item", "start", 0, "domain", 0],
  ["item", "end", 0, "domain", 1],
  ["item", "seed", 0, "domain", 3],
  ["item", "pt0", 0, "circle", 0],
  ["item", "domain", 0, "circle", 1],
  ["item", "circle", 0, "boundary", 0],
  ["item", "boundary", 0, "pop1", 0],
  ["item", "count1", 0, "pop1", 1],
  ["item", "seed2", 0, "pop1", 2],
  ["item", "dotsize", 0, "dots", 2],
  ["item", "pt1", 0, "relay", 0],
  ["item", "pt1", 0, "load", 0],
  ["item", "pt1", 0, "show", 0],
  ["item", "pt1", 0, "vec2", 0],
  ["item", "relay", 0, "line1", 0],
  ["item", "relay", 0, "line2", 0],
  ["item", "relay", 0, "vdisp", 0],
  ["list", "pt2", 0, "ent1", 0],
  ["list", "pt3", 0, "ent1", 1],
  ["tree", "ent1", 0, "interp", 0],
  ["tree", "interp", 0, "loft", 0],
  ["item", "loft", 0, "pop2", 0],
  ["item", "count2", 0, "pop2", 1],
  ["item", "seed2", 0, "pop2", 2],
  ["list", "pop1", 0, "line1", 1],
  ["list", "pop1", 0, "merge1", 1],
  ["list", "line1", 0, "merge2", 0],
  ["list", "pop2", 0, "merge1", 0],
  ["list", "pop2", 0, "line2", 1],
  ["list", "line2", 0, "merge2", 1],
  ["tree", "merge1", 0, "dots", 0],
  ["tree", "merge1", 0, "anchor", 0],
  ["list", "merge2", 0, "length", 0],
  ["item", "unitz", 0, "reverse", 0],
  ["item", "reverse", 0, "load", 1],
  ["item", "weight", 0, "load", 2],
  ["item", "load", 0, "ent2", 0],
  ["tree", "anchor", 0, "ent2", 1],
  ["item", "show", 0, "ent2", 2],
  ["list", "length", 0, "ent2", 3],
  ["item", "len", 0, "length", 1],
  ["item", "strength", 0, "length", 2],
  ["tree", "ent2", 0, "solver", 0],
  ["item", "button", 0, "solver", 1],
  ["item", "true", 0, "solver", 4],
  ["tree", "solver", 2, "explode", 0],
  ["item", "explode", 2, "vec2", 1],
  ["item", "explode", 2, "line3", 0],
  ["list", "explode", 3, "eval", 0],
  ["item", "evlen", 0, "eval", 1],
  ["item", "false", 0, "eval", 2],
  ["list", "eval", 0, "line3", 1],
  ["list", "line3", 0, "pipe", 0],
  ["item", "nodesize", 0, "pipe", 1],
  ["item", "strut", 0, "pipe", 4],
  ["item", "vec2", 0, "vdisp", 1],
  ["item", "width", 0, "vdisp", 3]
];

const canvas = document.querySelector(".canvas");
const layer = document.querySelector(".wires");

function port(name, side, index) {
  const body = document.querySelector(".n-" + name + " .body");
  const row = body.querySelectorAll("." + side + " li")[index] || body;
  const origin = canvas.getBoundingClientRect();
  const b = body.getBoundingClientRect();
  const r = row.getBoundingClientRect();
  return {
    x: (side === "out" ? b.right : b.left) - origin.left,
    y: r.top + r.height / 2 - origin.top
  };
}

function curve(a, b) {
  const reach = Math.max((b.x - a.x) / 2, Math.abs(b.y - a.y) * 0.755 - 14);
  return `M${a.x} ${a.y}C${a.x + reach} ${a.y} ${b.x - reach} ${b.y} ${b.x} ${b.y}`;
}

function draw() {
  layer.innerHTML = WIRES.map(([kind, from, i, to, j], n) => {
    const d = curve(port(from, "out", i), port(to, "in", j));
    if (kind === "item") return `<path class="wire" stroke-width="6" d="${d}"/>`;
    const dash = kind === "tree" ? 'stroke-dasharray="19 14" stroke-dashoffset="4" stroke-linecap="round"' : "";
    return `<mask id="core${n}" maskUnits="userSpaceOnUse" x="0" y="0" width="100%" height="100%">
      <rect width="100%" height="100%" fill="#fff"/>
      <path stroke="#000" stroke-width="3" ${dash} d="${d}"/></mask>
      <path class="wire" stroke-width="10" ${dash} mask="url(#core${n})" d="${d}"/>`;
  }).join("");
}

document.fonts.ready.then(draw);
addEventListener("resize", draw);
draw();
```
